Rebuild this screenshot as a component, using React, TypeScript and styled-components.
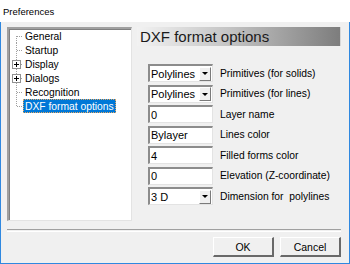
import React from 'react';
import styled, {createGlobalStyle} from 'styled-components';

const GlobalStyle = createGlobalStyle`
  html, body {
    margin: 0;
    padding: 0;
    background: #ffffff;
  }
  body {
    font-family: "Liberation Sans", Arial, sans-serif;
  }
`;

const Window = styled.div`
  width: 350px;
  height: 264px;
  display: flex;
  flex-direction: column;
  box-sizing: border-box;
  overflow: hidden;
`;

const TitleBar = styled.div`
  height: 22px;
  flex: none;
  background: #ffffff;
  display: flex;
  align-items: center;
  padding-left: 3px;
  font-size: 9.5px;
  color: #000;
`;

const Client = styled.div`
  flex: 1;
  display: flex;
  flex-direction: column;
  background: #f0f0f0;
  border: 1px solid #2f88e0;
  border-top: none;
  padding: 5px 8px 0 6px;
`;

const Main = styled.div`
  display: flex;
  gap: 5px;
`;

const TreeBox = styled.div`
  width: 125px;
  height: 194px;
  box-sizing: border-box;
  background: #ffffff;
  border-style: solid;
  border-width: 2px 1px 1px 2px;
  border-color: #a0a0a0 #e3e3e3 #e3e3e3 #a0a0a0;
  box-shadow: inset 1px 1px 0 #808080;
  display: flex;
  flex-direction: column;
`;

const TreeRow = styled.div`
  height: 14px;
  display: flex;
  align-items: center;
`;

const TreeLabel = styled.span<{$selected?: boolean}>`
  height: 14px;
  box-sizing: border-box;
  display: flex;
  align-items: center;
  padding: 0 2px;
  font-size: 10.3px;
  white-space: nowrap;
  color: ${p => (p.$selected ? '#ffffff' : '#000000')};
  background: ${p => (p.$selected ? '#0078d7' : 'transparent')};
  outline: ${p => (p.$selected ? '1px dotted #e8a860' : 'none')};
  outline-offset: -1px;
`;

type Connector = 'first' | 'middle' | 'last';

const TreeLines = ({kind, expandable}: {kind: Connector; expandable?: boolean}) => {
  const top = kind === 'first' ? 7 : 0;
  const bottom = kind === 'last' ? 7 : 14;
  return (
    <svg width="14" height="14" viewBox="0 0 14 14" style={{flex: 'none'}}>
      <line x1="7.5" y1={top} x2="7.5" y2={bottom} stroke="#a0a0a0" strokeDasharray="1 1"/>
      <line x1={expandable ? 12 : 8} y1="7.5" x2="14" y2="7.5" stroke="#a0a0a0" strokeDasharray="1 1"/>
      {expandable && (
        <g>
          <rect x="3.5" y="3.5" width="8" height="8" fill="#fff" stroke="#919191"/>
          <line x1="5" y1="7.5" x2="10" y2="7.5" stroke="#000"/>
          <line x1="7.5" y1="5" x2="7.5" y2="10" stroke="#000"/>
        </g>
      )}
    </svg>
  );
};

const RightPanel = styled.div`
  flex: 1;
  display: flex;
  flex-direction: column;
`;

const Banner = styled.div`
  height: 19px;
  display: flex;
  align-items: center;
  padding-left: 3px;
  font-size: 15px;
  color: #1a1a1a;
  background: linear-gradient(to right, #f2f2f2 0%, #c4c4c4 45%, #7d7d7d 100%);
  border-right: 1px solid #d8d8d8;
`;

const Form = styled.div`
  margin-top: 18px;
  padding-left: 11px;
  display: grid;
  grid-template-columns: 65px auto;
  grid-auto-rows: 18px;
  row-gap: 2.5px;
  column-gap: 7px;
`;

const Field = styled.div`
  box-sizing: border-box;
  height: 18px;
  background: #ffffff;
  border-style: solid;
  border-width: 2px 1px 1px 2px;
  border-color: #8c8c8c #e3e3e3 #e3e3e3 #8c8c8c;
  display: flex;
  align-items: center;
  padding-left: 1px;
  font-size: 11px;
  color: #000;
  white-space: nowrap;
`;

const FieldText = styled.span`
  flex: 1;
`;

const DropButton = styled.div`
  width: 12px;
  height: 14px;
  margin-right: 1px;
  box-sizing: border-box;
  background: #f0f0f0;
  border-style: solid;
  border-width: 1px;
  border-color: #ffffff #7a7a7a #7a7a7a #ffffff;
  display: flex;
  align-items: center;
  justify-content: center;
  &::after {
    content: '';
    border-left: 3px solid transparent;
    border-right: 3px solid transparent;
    border-top: 3px solid #000;
  }
`;

const Label = styled.div`
  display: flex;
  align-items: center;
  font-size: 10.3px;
  color: #000;
  white-space: pre;
`;

const Separator = styled.div`
  margin-top: 8px;
  height: 1px;
  border-top: 1px solid #a0a0a0;
  border-bottom: 1px solid #ffffff;
`;

const ButtonRow = styled.div`
  margin-top: 5px;
  display: flex;
  justify-content: flex-end;
  gap: 6px;
`;

const Button = styled.div`
  width: 61px;
  height: 20px;
  box-sizing: border-box;
  background: #f0f0f0;
  border-style: solid;
  border-width: 1px 2px 2px 1px;
  border-color: #ffffff #696969 #696969 #ffffff;
  display: flex;
  align-items: center;
  justify-content: center;
  font-size: 10.5px;
  color: #000;
`;

const treeItems: {label: string; expandable?: boolean}[] = [
  {label: 'General'},
  {label: 'Startup'},
  {label: 'Display', expandable: true},
  {label: 'Dialogs', expandable: true},
  {label: 'Recognition'},
  {label: 'DXF format options'},
];

const fields: {value: string; label: string; combo?: boolean}[] = [
  {value: 'Polylines', label: 'Primitives (for solids)', combo: true},
  {value: 'Polylines', label: 'Primitives (for lines)', combo: true},
  {value: '0', label: 'Layer name'},
  {value: 'Bylayer', label: 'Lines color'},
  {value: '4', label: 'Filled forms color'},
  {value: '0', label: 'Elevation (Z-coordinate)'},
  {value: '3 D', label: 'Dimension for  polylines', combo: true},
];

export default function App() {
  const selected = treeItems.length - 1;
  return (
    <>
      <GlobalStyle/>
      <Window>
        <TitleBar>Preferences</TitleBar>
        <Client>
          <Main>
            <TreeBox>
              {treeItems.map((t, i) => (
                <TreeRow key={t.label}>
                  <TreeLines
                    kind={i === 0 ? 'first' : i === treeItems.length - 1 ? 'last' : 'middle'}
                    expandable={t.expandable}
                  />
                  <TreeLabel $selected={i === selected}>{t.label}</TreeLabel>
                </TreeRow>
              ))}
            </TreeBox>
            <RightPanel>
              <Banner>DXF format options</Banner>
              <Form>
                {fields.map((f, i) => (
                  <React.Fragment key={i}>
                    <Field>
                      <FieldText>{f.value}</FieldText>
                      {f.combo && <DropButton/>}
                    </Field>
                    <Label>{f.label}</Label>
                  </React.Fragment>
                ))}
              </Form>
            </RightPanel>
          </Main>
          <Separator/>
          <ButtonRow>
            <Button>OK</Button>
            <Button>Cancel</Button>
          </ButtonRow>
        </Client>
      </Window>
    </>
  );
}
